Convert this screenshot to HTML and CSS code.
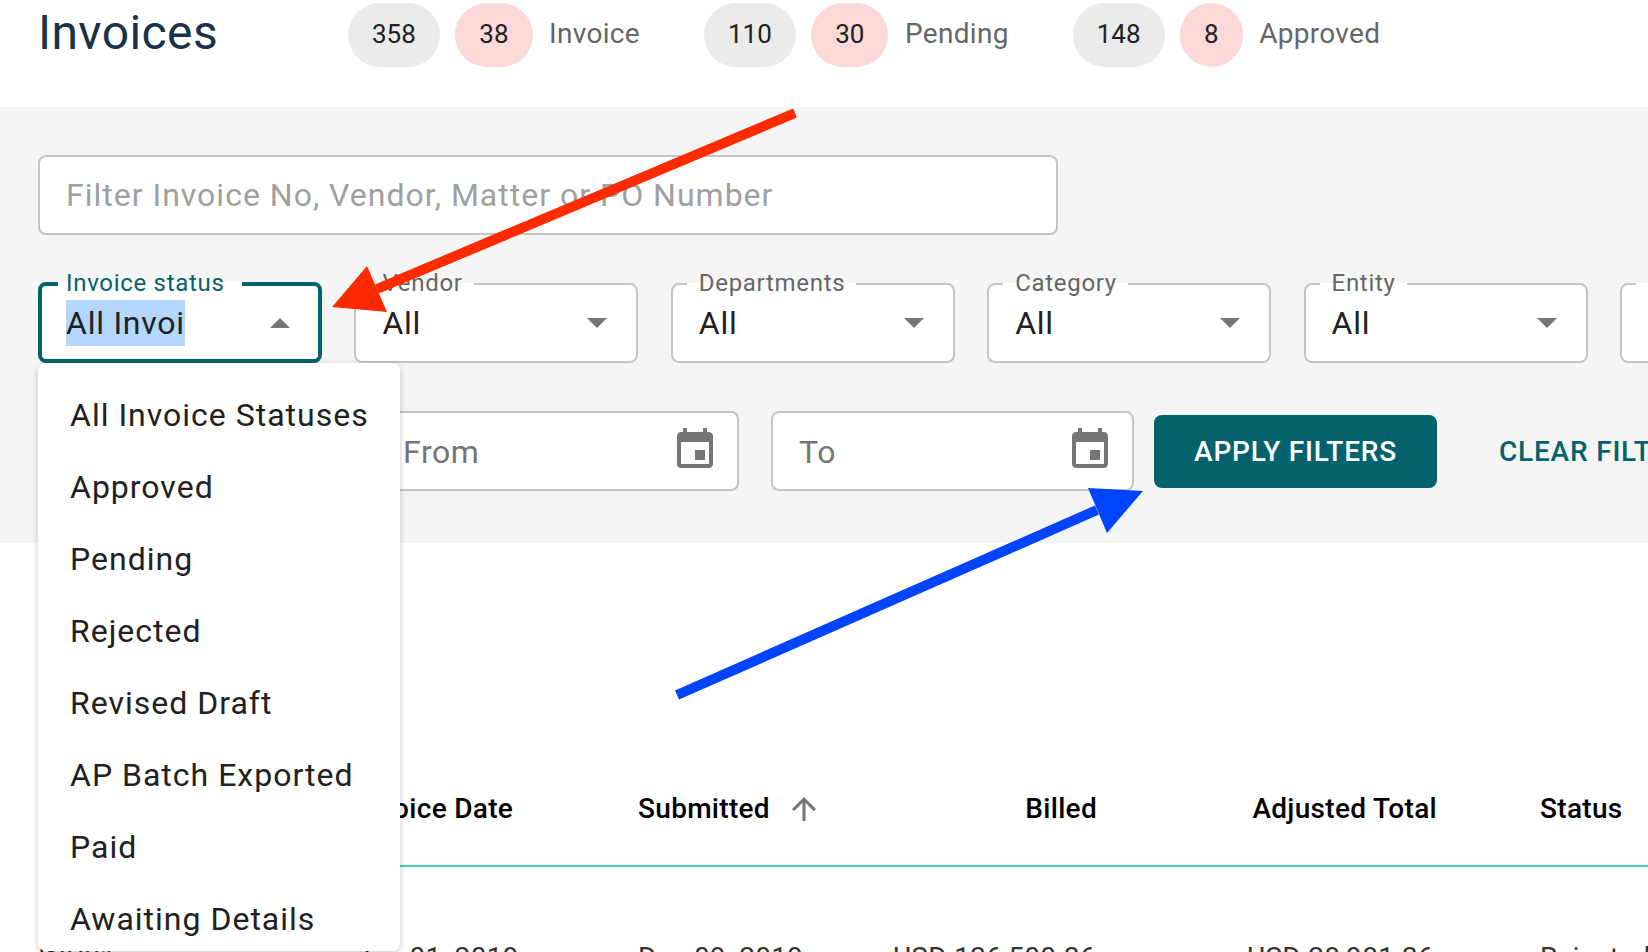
FILE: index.html
```html
<!DOCTYPE html>
<html lang="en">
<head>
<meta charset="utf-8">
<title>Invoices</title>
<link rel="stylesheet" href="styles.css">
</head>
<body>
<div class="page">
  <header class="top">
    <h1 class="title">Invoices</h1>
    <div class="stat"><span class="pill">358</span><span class="pill pink">38</span><span class="stat-label">Invoice</span></div>
    <div class="stat"><span class="pill">110</span><span class="pill pink">30</span><span class="stat-label">Pending</span></div>
    <div class="stat"><span class="pill">148</span><span class="pill pink">8</span><span class="stat-label">Approved</span></div>
  </header>

  <section class="filters">
    <div class="search">Filter Invoice No, Vendor, Matter or PO Number</div>

    <div class="select-row">
      <fieldset class="field focused">
        <legend>Invoice status</legend>
        <div class="value"><span class="selected">All Invoi</span><i class="caret up"></i></div>
      </fieldset>
      <fieldset class="field">
        <legend>Vendor</legend>
        <div class="value"><span>All</span><i class="caret"></i></div>
      </fieldset>
      <fieldset class="field">
        <legend>Departments</legend>
        <div class="value"><span>All</span><i class="caret"></i></div>
      </fieldset>
      <fieldset class="field">
        <legend>Category</legend>
        <div class="value"><span>All</span><i class="caret"></i></div>
      </fieldset>
      <fieldset class="field">
        <legend>Entity</legend>
        <div class="value"><span>All</span><i class="caret"></i></div>
      </fieldset>
      <fieldset class="field">
        <legend>Office</legend>
        <div class="value"><span>All</span><i class="caret"></i></div>
      </fieldset>
    </div>

    <div class="date-row">
      <div class="date spacer"></div>
      <div class="date from"><span>From</span>
        <svg class="cal" viewBox="0 0 24 24"><path d="M17 12h-5v5h5v-5zM16 1v2H8V1H6v2H5c-1.11 0-1.99.9-1.99 2L3 19c0 1.1.89 2 2 2h14c1.1 0 2-.9 2-2V5c0-1.1-.9-2-2-2h-1V1h-2zm3 18H5V8h14v11z"/></svg>
      </div>
      <div class="date"><span>To</span>
        <svg class="cal" viewBox="0 0 24 24"><path d="M17 12h-5v5h5v-5zM16 1v2H8V1H6v2H5c-1.11 0-1.99.9-1.99 2L3 19c0 1.1.89 2 2 2h14c1.1 0 2-.9 2-2V5c0-1.1-.9-2-2-2h-1V1h-2zm3 18H5V8h14v11z"/></svg>
      </div>
      <button class="apply">APPLY FILTERS</button>
      <button class="clear">CLEAR FILTERS</button>
    </div>
  </section>

  <section class="table">
    <div class="row head">
      <div>Invoice No</div>
      <div>Invoice Date</div>
      <div class="sorted">Submitted
        <svg class="sort" viewBox="0 0 24 24"><path d="M4 12l1.41 1.41L11 7.83V20h2V7.83l5.58 5.59L20 12l-8-8-8 8z"/></svg>
      </div>
      <div class="num">Billed</div>
      <div class="num">Adjusted Total</div>
      <div class="status">Status</div>
    </div>
    <div class="row body">
      <div>INV01</div>
      <div>Jun 01, 2019</div>
      <div>Dec 09, 2019</div>
      <div class="num billed">USD 136,500.36</div>
      <div class="num adjusted">USD 28,981.36</div>
      <div class="status">Rejected</div>
    </div>
  </section>

  <ul class="menu">
    <li>All Invoice Statuses</li>
    <li>Approved</li>
    <li>Pending</li>
    <li>Rejected</li>
    <li>Revised Draft</li>
    <li>AP Batch Exported</li>
    <li>Paid</li>
    <li>Awaiting Details</li>
  </ul>

  <svg class="arrows" viewBox="0 0 1648 952">
    <line class="red-line" x1="795" y1="113" x2="377" y2="289"/>
    <polygon class="red-fill" points="332,307 367,266 387,312"/>
    <line class="blue-line" x1="677" y1="695" x2="1097" y2="510"/>
    <polygon class="blue-fill" points="1143,491 1088,488 1107,533"/>
  </svg>
</div>
</body>
</html>
```

FILE: styles.css
```css
* { box-sizing: border-box; }
html, body { margin: 0; height: 100%; overflow: hidden; background: #fff; }
body { font-family: Roboto, "Liberation Sans", sans-serif; color: #212121; }
.page { position: relative; width: 1648px; height: 952px; overflow: hidden; background: #fff; }

.top { display: flex; align-items: flex-start; height: 107px; padding: 3px 0 0 38px; }
.title { width: 310px; margin: 0; font-size: 48px; font-weight: 400; line-height: 60px; letter-spacing: .4px; color: #17324a; }
.stat { display: flex; align-items: center; gap: 15.5px; margin-right: 64px; }
.pill { height: 64px; padding: 0 24px; border-radius: 32px; background: #ebebeb; font-size: 26px; line-height: 62px; color: #212121; }
.pill.pink { background: #fbd9d9; }
.stat-label { font-size: 28px; letter-spacing: .3px; color: #666; margin: -4px 0 0 1px; }

.filters { height: 436px; padding: 48px 0 0 38px; background: #f5f5f5; }
.search { width: 1020px; height: 80px; padding: 1px 0 0 26px; border: 2px solid #c4c4c4; border-radius: 8px; background: #fff; font-size: 32px; line-height: 75px; letter-spacing: 1px; color: #a0a0a0; }

.select-row { display: flex; align-items: flex-start; gap: 32.4px; width: 1700px; margin-top: 35px; }
.field { flex: none; width: 284px; height: 93px; margin: 0; padding: 0 29px 0 26px; border: 2px solid #c4c4c4; border-radius: 8px; background: #fff; min-width: 0; }
.field legend { margin-left: -12px; padding: 0 11px 2px 12px; font-size: 24px; line-height: 26px; letter-spacing: .7px; color: #666; }
.field.focused { border: 4px solid #03626b; padding: 0 28px 0 24px; }
.field.focused legend { margin-left: -8px; padding: 0 17px 2px 8px; color: #03626b; }
.value { display: flex; align-items: center; height: 46px; margin-top: 2px; font-size: 32px; letter-spacing: .75px; color: #212121; }
.selected { background: #b3d7ff; line-height: 46px; }
.caret { margin-left: auto; width: 0; height: 0; border-left: 10px solid transparent; border-right: 10px solid transparent; border-top: 10px solid #757575; }
.caret.up { border-top: 0; border-bottom: 10px solid #757575; }

.date-row { display: flex; align-items: center; gap: 33px; margin-top: 48px; width: 1700px; }
.date { display: flex; align-items: center; justify-content: space-between; flex: none; width: 363px; height: 80px; padding: 0 18px 0 26px; border: 2px solid #c4c4c4; border-radius: 8px; background: #fff; font-size: 32px; letter-spacing: .6px; color: #757575; }
.date.spacer { width: 304px; }
.date.from { width: 364px; margin-right: -1px; }
.date span { margin-top: 2px; }
.cal { width: 48px; height: 48px; margin-top: -2px; fill: #757575; }
.apply, .clear { flex: none; font-family: inherit; font-size: 28px; font-weight: 500; letter-spacing: .8px; border: 0; padding: 0; }
.apply { width: 283px; height: 73px; margin-left: -13px; border-radius: 8px; background: #03626b; color: #fff; }
.clear { margin-left: 29px; background: none; color: #03626b; }

.table { padding: 207px 0 0 38px; }
.row { display: grid; grid-template-columns: 317px 283px 222px 237px 340px 1fr; font-size: 28px; letter-spacing: .3px; }
.row .num { text-align: right; }
.row .status { padding-left: 103px; }
.row > div { white-space: nowrap; }
.head { height: 117px; align-items: center; padding-top: 2px; border-bottom: 2px solid #3fd2bd; font-weight: 500; color: #000; }
.sorted { display: flex; align-items: center; gap: 16px; }
.sort { width: 36px; height: 36px; fill: #757575; }
.body { padding-top: 71px; line-height: 40px; color: #333; }
.row .billed { padding-right: 1px; }
.row .adjusted { padding-right: 3px; }

.menu { position: absolute; left: 38px; top: 363px; width: 362px; height: 588px; margin: 0; padding: 16px 0 0; overflow: hidden; list-style: none; background: #fff; border-radius: 8px; box-shadow: 0 2px 6px rgba(0,0,0,.22); }
.menu li { height: 72px; padding-left: 32px; font-size: 32px; line-height: 72px; letter-spacing: 1px; color: #212121; white-space: nowrap; }

.arrows { position: absolute; left: 0; top: 0; width: 1648px; height: 952px; pointer-events: none; }
.red-line { stroke: #ff2a00; stroke-width: 10; }
.red-fill { fill: #ff2a00; }
.blue-line { stroke: #0044ff; stroke-width: 10; }
.blue-fill { fill: #0044ff; }
```
